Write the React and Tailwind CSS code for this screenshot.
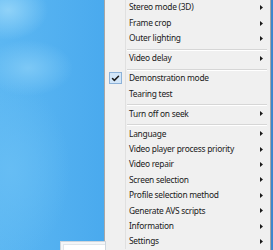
import { Check } from 'lucide-react';

const groups = [
  [
    { label: 'Stereo mode (3D)', sub: true },
    { label: 'Frame crop', sub: true },
    { label: 'Outer lighting', sub: true },
  ],
  [{ label: 'Video delay', sub: true }],
  [
    { label: 'Demonstration mode', checked: true },
    { label: 'Tearing test' },
  ],
  [{ label: 'Turn off on seek', sub: true }],
  [
    { label: 'Language', sub: true },
    { label: 'Video player process priority', sub: true },
    { label: 'Video repair', sub: true },
    { label: 'Screen selection', sub: true },
    { label: 'Profile selection method', sub: true },
    { label: 'Generate AVS scripts', sub: true },
    { label: 'Information', sub: true },
    { label: 'Settings', sub: true },
  ],
];

const Arrow = () => (
  <svg width="3" height="5" viewBox="0 0 3 5" className="mr-[7px]">
    <path d="M0 0L3 2.5L0 5z" fill="#1a1a1a" />
  </svg>
);

const MenuItem = ({ item }) => (
  <div className="flex h-[15.4px] items-center">
    <div className="flex w-[20px] shrink-0 justify-center">
      {item.checked && (
        <div className="ml-[1px] flex h-[12px] w-[13px] items-center justify-center border border-[#8db2d9] bg-[#d3e6f8]">
          <Check className="h-[9px] w-[9px] text-[#1c1c1c]" strokeWidth={4} />
        </div>
      )}
    </div>
    <div className="h-full w-[2px] shrink-0 border-l border-[#e0e0e0]" />
    <span className="flex-1 pl-[2px] text-[8.4px] leading-none tracking-[-0.25px] text-[#202020]">{item.label}</span>
    {item.sub && <Arrow />}
  </div>
);

const Separator = () => (
  <div className="flex h-[4.6px]">
    <div className="w-[20px] shrink-0" />
    <div className="h-full w-[2px] shrink-0 border-l border-[#e0e0e0]" />
    <div className="mr-[3px] flex-1 pt-[2.6px]">
      <div className="h-px bg-[#d6d6d6]" />
      <div className="h-px bg-white" />
    </div>
  </div>
);

export default function App() {
  return (
    <div
      className="flex h-[250px] w-[273px] overflow-hidden bg-[#50b0f0]"
      style={{ fontFamily: '"Noto Sans", "Open Sans", sans-serif' }}
    >
      {/* desktop */}
      <div className="relative w-[104px] shrink-0 bg-[radial-gradient(ellipse_40px_30px_at_8px_10px,#8fd2f8,transparent),radial-gradient(ellipse_45px_28px_at_28px_68px,#7cc8f6,transparent),radial-gradient(ellipse_60px_90px_at_10px_170px,#66bdf4,transparent),linear-gradient(90deg,#5cb7f2,#4aaaee)]">
        <div className="absolute left-[60px] top-[241px] h-[12px] w-[46px] border border-[#cfd6dd] bg-[#f4f6f8]">
          <div className="mt-[2px] ml-[2px] h-full border-l border-t border-[#e2e6ea] bg-white" />
        </div>
      </div>

      {/* context menu */}
      <div className="w-[167px] shrink-0 border-l border-r border-[#a6a6a6] bg-[#f0f0f0]">
        <div className="flex flex-col">
          {groups.map((g, gi) => (
            <div key={gi}>
              {gi > 0 && <Separator />}
              {g.map((item) => (
                <MenuItem key={item.label} item={item} />
              ))}
            </div>
          ))}
        </div>
      </div>

      <div className="w-[2px] shrink-0 bg-[#3f86cc]" />
    </div>
  );
}
